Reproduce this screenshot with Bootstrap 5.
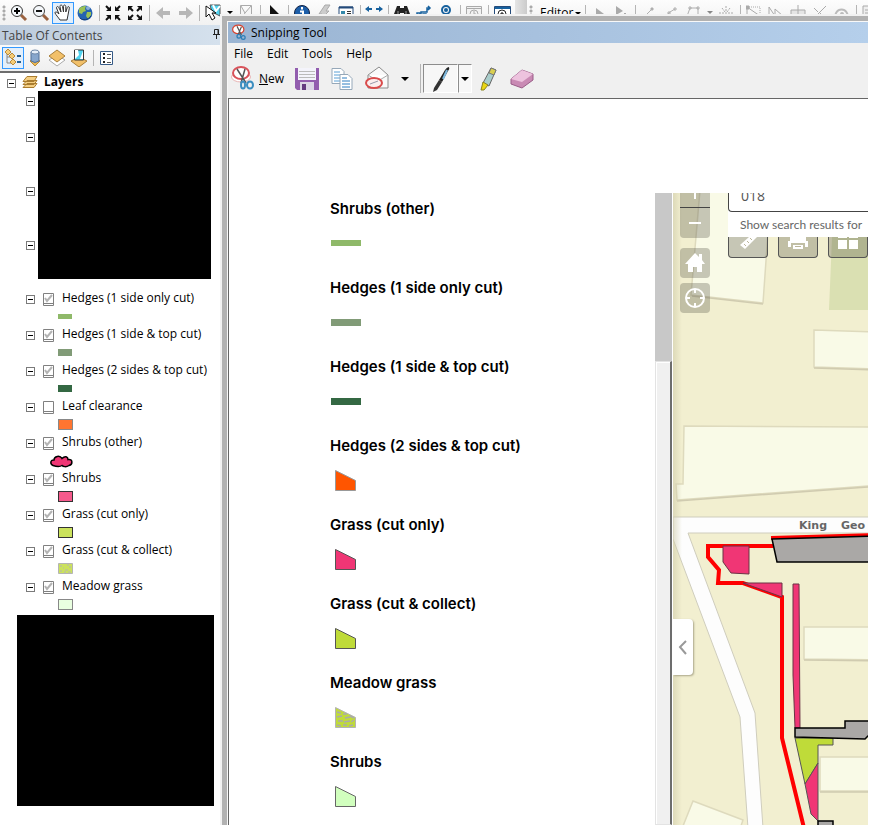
<!DOCTYPE html>
<html lang="en">
<head>
<meta charset="utf-8">
<meta name="viewport" content="width=device-width, initial-scale=1">
<title>Map layers</title>
<link href="https://cdn.jsdelivr.net/npm/bootstrap@5.3.0/dist/css/bootstrap.min.css" rel="stylesheet">
<style>
body{font:12px/18px "Open Sans","Noto Sans",sans-serif;color:#000;background:#fff}
button,input{font:inherit;color:inherit}
button{border:0;padding:0;background:none}
svg{display:block}
.desk{padding:0 3px 3px 0}
/* main tool strip */
.strip{height:25px;background:linear-gradient(#fdfdfd,#f1f1f1)}
.strip>*{flex:none}
.tb{width:22px;height:22px;display:flex;align-items:center;justify-content:center;border:1px solid transparent}
.tb.picked{border-color:#3399ff;background:#e3effb}
.sep{width:6px;height:16px;background:linear-gradient(#b5b5b5,#b5b5b5) center/1px 100% no-repeat}
.grip{width:8px;height:16px;background:radial-gradient(circle,#aaa 1px,transparent 2px) center top/4px 4px repeat-y}
.drop{width:11px;height:22px;display:flex;align-items:center;justify-content:center}
.drop::after{content:"";border:3px solid transparent;border-top-color:#000;border-bottom:0}
.drop.off::after{border-top-color:#888}
.cap{width:12px;height:25px;margin-left:2px;background:linear-gradient(90deg,#e5e5e5,#cbcbcb)}
.editor{width:47px;height:22px;text-align:left;padding-left:5px;white-space:nowrap}
.editor::after{content:"";display:inline-block;margin-left:2px;vertical-align:2px;border:3px solid transparent;border-top-color:#000;border-bottom:0}
/* contents panel */
.toc{width:222px}
.toc-main{width:220px}
.toc-head{height:20px;padding:2px 0 0 2px;background:linear-gradient(90deg,#bccbdc,#d5e1ed);color:#444}
.toc-bar{height:28px;padding-left:2px;background:linear-gradient(#fafafa,#efefef);border-bottom:2px solid #6d6d6d}
.toc-row{height:18px}
.toc-row .node{margin-top:2px}
.toc-row label{margin-left:8px;white-space:nowrap}
.toc-layers{padding-left:7px}
.node{width:9px;height:9px;border:1px solid #7a7a7a;background:linear-gradient(#000,#000) center/5px 1px no-repeat #fff;flex:none}
.layer .toc-row{padding-left:26px}
.tick{appearance:none;margin:3px 0 0 8px;width:11px;height:13px;background:url("data:image/svg+xml,%3Csvg xmlns='http://www.w3.org/2000/svg' width='11' height='13'%3E%3Cpath d='M.5.5h10v12H.5zM0 10.5h11' fill='%23fff' stroke='%23808080'/%3E%3C/svg%3E")}
.tick:checked{background-image:url("data:image/svg+xml,%3Csvg xmlns='http://www.w3.org/2000/svg' width='11' height='13'%3E%3Cpath d='M.5.5h10v12H.5zM0 10.5h11' fill='%23fff' stroke='%23808080'/%3E%3Cpath d='M2 5l2 3 5-6' fill='none' stroke='%23b4b4b4' stroke-width='2'/%3E%3C/svg%3E")}
.layer .sym{padding-left:58px}
.layer .cloud{padding-left:49px}
.bar{width:14px;height:5px}.bar.tall{height:7px}
.box{width:15px;height:11px;border:1px solid #333}
.c-lime{background:#8fb969}.c-sage{background:#819b77}.c-pine{background:#346843}
.c-orange{background:#ff7530;border-color:#888}.c-pink{background:#f55a8c}
.c-grass{background:#cbe25c}.c-mint{background:#e9ffe0;border-color:#888}
.hidden-nodes{height:198px;padding-left:26px}
.n36{height:36px;padding-top:6px}.n54{height:54px;padding-top:6px}
.black-a{width:173px;height:188px;margin-left:3px;background:#000}
.black-b{width:197px;height:191px;margin:2px 0 0 17px;background:#000}
/* window over the desktop */
.snip{left:222px;top:16px;right:0;bottom:0;border:5px solid #b2b2b2;border-width:5px 0 0 5px;outline:2px solid #f2f2f2;background:#f0f0f0;overflow:hidden}
.snip-in{border:1px solid #f8f8f8;border-width:1px 0 0 1px}
.snip-title{height:21px;padding-left:4px;background:linear-gradient(90deg,#9ab4d2,#b5cfeb)}
.snip-title span{margin-left:4px}
.snip-menu{height:21px;padding-left:6px;gap:14px}
.snip-tools{height:34px;padding-left:3px}
.snip-tools svg{flex:none}
.act{height:30px;display:flex;align-items:center}
.save{padding-left:3px}
.snip-tools .sep{height:29px}
.pen{width:35px;height:29px;border:1px solid #8d8d8d;border-right-color:#fff;border-bottom-color:#fff;background:#f7f7f7;display:flex;align-items:center;justify-content:center}
.pen.narrow{width:14px}.pen.narrow::after,.mail::after{content:"";border:4px solid transparent;border-top-color:#000;border-bottom:0}
.client{border:1px solid #666;border-width:1px 0 0 1px;background:#fff}
.legend{padding:89px 17px 0 101px;margin:0;list-style:none}
.legend li{height:79px}
.legend h2{font:600 15px/42px Inter,sans-serif;margin:0;white-space:nowrap}
.legend svg{height:28px;width:31px}
.upper{margin-top:94px}
.scroller{width:17px;background:#f0f0f0;flex:none}
.scroller .track{height:168px;background:#c8c8c8}
.scroller .thumb{border:1px solid #e3e3e3;border-right:2px solid #6d6d6d;box-shadow:inset 1px 1px #fff}
.map{background:#f2efd0;margin-left:1px;min-width:0;overflow:hidden}
.mapbtn{width:30px;height:30px;border-radius:4px;background:rgba(80,80,65,.3);color:#fff;display:flex;align-items:center;justify-content:center}
.zoomers{left:7px;top:0}
.zoomers .plus{height:15px;border-radius:0;border-bottom:1px solid #444;align-items:flex-start}
.zoomers .minus{border-radius:0 0 4px 4px;margin-bottom:10px}
.zoomers .home{margin-bottom:5px}
.search{left:55px;top:0;right:0}
.search input{display:block;width:100%;height:19px;border:1px solid #444;border-width:0 0 1px 1px;border-radius:0 0 0 4px;padding:0 0 13px 12px;font-size:14px;line-height:6px;color:#555;background:#fff;outline:0}
.find{background:#fff;height:44px}
.hint{height:25px;padding-left:12px;font-family:Lato,sans-serif;line-height:25px;color:#666;white-space:nowrap;display:block;text-decoration:none}
.tools{gap:10px}
.tool{width:40px;height:21px;border:1px solid #555;border-top:0;border-radius:0 0 4px 4px;background:rgba(80,80,65,.3);display:flex;justify-content:center;flex:none}
.fold{left:0;top:426px;width:20px;height:56px;background:#fff;border-radius:0 4px 4px 0;box-shadow:1px 1px 2px #aaa68a}
.street{font:bold 11px "DejaVu Sans",sans-serif;fill:#666}
</style>
<script src="https://cdn.jsdelivr.net/npm/bootstrap@5.3.0/dist/js/bootstrap.bundle.min.js"></script>
</head>
<body>
<div class="desk vh-100">
<div class="position-relative h-100 d-flex flex-column overflow-hidden">

<header class="strip d-flex align-items-center overflow-hidden">
<span class="grip"></span>
<button class="tb" aria-label="Zoom in"><svg width="18" height="18"><path d="M11 11l5 5" stroke="#9a6240" stroke-width="3"/><circle cx="7" cy="7" r="5.5" fill="#f5f8fb" stroke="#333"/><path d="M4 7h6M7 4v6" stroke="#000" stroke-width="2"/></svg></button>
<button class="tb" aria-label="Zoom out"><svg width="18" height="18"><path d="M11 11l5 5" stroke="#9a6240" stroke-width="3"/><circle cx="7" cy="7" r="5.5" fill="#f5f8fb" stroke="#444"/><path d="M4 7h6" stroke="#111" stroke-width="2"/></svg></button>
<button class="tb picked" aria-label="Pan"><svg width="18" height="18" fill="#fff" stroke="#333"><path d="M6 16C4 13 2 11 1 9c0-2 2-1 4 1L2.500 4c0-2 2-2 2.500 0l2 4L6 2.500c0-2 2-2 2.500 0L9.500 8V2.500c0-2 2-2 2.300 0V8l1.500-4.500c.5-1.500 2.500-1 2 .7L14 11l-1 5z"/></svg></button>
<button class="tb" aria-label="Full extent"><svg width="18" height="18"><circle cx="9" cy="9" r="7.500" fill="#2563b0"/><path d="M3 5c2-3 5-3 7-3l-1 3 1 2-3 1-1 2-3-1zM11 8l4 0 0 3-3 4-2-3z" fill="#9ac255"/><path d="M4 14c3 3 8 2 11-2" stroke="#15366e" fill="none"/><circle cx="12" cy="4" r="2" fill="#cfe3f3" opacity=".6"/></svg></button>
<span class="sep"></span>
<button class="tb" aria-label="Fixed zoom in"><svg width="16" height="16" fill="none" stroke="#111" stroke-width="2"><path d="M1 1l4 4M15 1l-4 4M1 15l4-4M15 15l-4-4"/><path fill="#111" stroke="none" d="M6 1v5H1zM10 1v5h5zM6 15v-5H1zM10 15v-5h5z"/></svg></button>
<button class="tb" aria-label="Fixed zoom out"><svg width="16" height="16" stroke="#111" stroke-width="2"><path d="M2 2l4 4M14 2l-4 4M2 14l4-4M14 14l-4-4"/><path fill="#111" stroke="none" d="M1 1h5L1 6zM15 1h-5l5 5zM1 15h5l-5-5zM15 15h-5l5-5z"/></svg></button>
<span class="sep"></span>
<button class="tb" aria-label="Back"><svg width="15" height="14"><path d="M0 7l7-6v4h7v4H7v4z" fill="#b7b7b7"/></svg></button>
<button class="tb" aria-label="Forward"><svg width="15" height="14"><path d="M15 7L8 1v4H1v4h7v4z" fill="#b7b7b7"/></svg></button>
<span class="sep"></span>
<button class="tb" aria-label="Select features"><svg width="18" height="18"><path d="M6 1h10v11L8 8z" fill="#4fd3f0" stroke="#555"/><path d="M9 1l3 6 4-5" stroke="#fff" fill="none" stroke-width="2"/><path d="M2 2v11l3-3 3 6 3-2-3-5h4z" fill="#fff" stroke="#111"/></svg></button>
<button class="drop" aria-label="Select options"></button>
<button class="tb" aria-label="Clear selection"><svg width="12" height="16" fill="#f5f5f5" stroke="#aaa"><path d="M.5.500h11v14H.5zM1 1l4 7 6-7M5 8l-4 6"/></svg></button>
<span class="sep"></span>
<button class="tb" aria-label="Select elements"><svg width="12" height="17"><path d="M2 1v14l3-3 2 5 3-1-2-5h4z" fill="#111"/></svg></button>
<span class="sep"></span>
<button class="tb" aria-label="Identify"><svg width="18" height="18"><circle cx="9" cy="9" r="7.500" fill="#1d5ea8" stroke="#124"/><path d="M7 7.500h3V14M9 3v2.500" stroke="#fff" stroke-width="2" fill="none"/></svg></button>
<button class="tb" aria-label="Hyperlink"><svg width="14" height="18"><path d="M8 1h5L9 7h3L2 17l3-7H2z" fill="#ccc" stroke="#aaa"/></svg></button>
<button class="tb" aria-label="HTML popup"><svg width="16" height="16"><path d="M1 2h14v12H1z" fill="#fff" stroke="#244b7a"/><path d="M1 2.500h14" stroke="#244b7a" stroke-width="2"/><path d="M3 6h4v5H3z" fill="#38a"/><path d="M9 6.500h4M9 8.500h4M9 11h4" stroke="#333"/></svg></button>
<span class="sep"></span>
<button class="tb" aria-label="Measure"><svg width="18" height="18"><path d="M0 5l4-3v2h3v2H4v2zM18 5l-4-3v2h-3v2h3v2z" fill="#17619e"/><path d="M1 10h16v5H1z" fill="#e9b872"/></svg></button>
<span class="sep"></span>
<button class="tb" aria-label="Find"><svg width="16" height="16" fill="#222"><path d="M3 1h3v2h4V1h3l3 8v4h-6V8H6v5H0V9z"/><path d="M4 6v4M12 6v4" stroke="#999"/></svg></button>
<button class="tb" aria-label="Find route"><svg width="16" height="16" fill="none" stroke="#17619e" stroke-width="1.500"><path d="M2 11h3V7h6V3h3M12 1l2 2-2 2"/><path d="M1 8h3v3H1zM7 9h3v3H7z" fill="#fff"/></svg></button>
<button class="tb" aria-label="Go to XY"><svg width="16" height="18" fill="none" stroke="#17619e" stroke-width="2"><circle cx="8" cy="6" r="4"/><circle cx="8" cy="6" r="1"/><path d="M1 13h14" stroke-dasharray="2 1"/></svg></button>
<span class="sep"></span>
<button class="tb" aria-label="Time slider"><svg width="16" height="16" fill="#f2f2f2" stroke="#aaa"><path d="M.5 1.500h15v13H.5zM1 3.500h14"/><circle cx="8" cy="9" r="4"/><path d="M8 6v3h2"/></svg></button>
<span class="sep"></span>
<button class="tb" aria-label="Viewer window"><svg width="17" height="16"><path d="M.5 1.500h16v13H.5z" fill="#fff" stroke="#244b7a"/><path d="M1 3h15" stroke="#17619e" stroke-width="2"/><circle cx="8" cy="9" r="4" fill="#fff" stroke="#222"/><path d="M6 9h4M8 7v4" stroke="#000"/></svg></button>
<span class="cap"></span><span class="grip"></span>
<button class="editor">Editor</button>
<span class="sep"></span>
<button class="tb" aria-label="Edit tool"><svg width="12" height="14"><path d="M3 2v11l8-5z" fill="#aaa"/></svg></button>
<button class="tb" aria-label="Annotation tool"><svg width="14" height="16"><path d="M2 1v9l7-4z" fill="#aaa"/><path d="M10 8h2v2h-2z" fill="#aaa"/></svg></button>
<span class="sep"></span>
<button class="tb" aria-label="Straight"><svg width="14" height="14" stroke="#b0b0b0"><path d="M2 11l8-8"/><path d="M9 2h2v2H9z" fill="#aaa"/></svg></button>
<button class="tb" aria-label="Arc"><svg width="14" height="14" stroke="#b0b0b0" fill="none"><path d="M1 12q4-7 10-9M4 6h2v2H4zM10 2h2v2h-2z"/></svg></button>
<button class="tb" aria-label="Trace"><svg width="16" height="16" stroke="#b0b0b0" fill="none"><path d="M1 14L5 3h8v10M4 2h2v2H4zM12 2h2v2h-2z"/></svg></button>
<button class="drop off" aria-label="Trace options"></button>
<button class="tb" aria-label="Point"><svg width="16" height="16" stroke="#aaa" fill="none"><path d="M8 1v6M4 3l3 4M12 3L9 7M1 8h14M1 10h14" stroke-dasharray="2 1"/></svg></button>
<span class="sep"></span>
<button class="tb" aria-label="Edit vertices"><svg width="16" height="16" stroke="#aaa" fill="none"><path d="M1 13V2l13 9"/><path d="M3 2h11v9" stroke-dasharray="1 1"/><path d="M0 1h3v3H0zM13 10h2v2h-2z" fill="#aaa"/></svg></button>
<button class="tb" aria-label="Reshape"><svg width="16" height="16" stroke="#aaa" fill="none"><path d="M1 13V2l6 9V4l8 7"/></svg></button>
<button class="tb" aria-label="Cut polygons"><svg width="16" height="16" stroke="#aaa" fill="#e5e5e5"><path d="M1 5h14v9H1zM8 0v14"/></svg></button>
<button class="tb" aria-label="Split"><svg width="16" height="16" stroke="#aaa"><path d="M3 12L14 1M2 3l4 4M8 8l5 5"/></svg></button>
<button class="tb" aria-label="Rotate"><svg width="16" height="16" stroke="#bbb" fill="none" stroke-width="2"><path d="M2 13a6 6 0 1 1 11 0"/><circle cx="8" cy="9" r="1"/></svg></button>
<span class="sep"></span>
<button class="tb" aria-label="Attributes"><svg width="16" height="16" stroke="#aaa" fill="#eee"><path d="M1 1h12v14H1zM3 5h8M3 8h8"/></svg></button>
</header>

<aside class="toc flex-grow-1 border-end">
<div class="toc-main">
<div class="toc-head d-flex align-items-center justify-content-between"><span>Table Of Contents</span>
<button class="pb-1" aria-label="Pin"><svg width="7" height="10" fill="none" stroke="#222"><path d="M1.500 5V.5h4V5M5 1v4M0 5.500h7M3.500 6v4"/></svg></button></div>
<div class="toc-bar d-flex align-items-center">
<button class="tb picked" aria-label="List by drawing order"><svg width="18" height="18"><path d="M3 5v9h4M3 8h4" stroke="#888" fill="none"/><path d="M4 0l3 3-3 3-3-3zM8 4l3 3-3 3-3-3zM9 10l3 3-3 3-3-3z" fill="#f5cd78" stroke="#b98a38"/><path d="M13 7h4M13 13h4" stroke="#235f94" stroke-width="2"/></svg></button>
<button class="tb" aria-label="List by source"><svg width="14" height="18"><path d="M2 12l5-3 5 3-5 5z" fill="#eeb84d" stroke="#b98a38"/><path d="M3 3v9q4 3 8 0V3z" fill="#87a6cc" stroke="#506e94"/><ellipse cx="7" cy="3" rx="4" ry="2" fill="#e5eef8" stroke="#6d87a8"/></svg></button>
<button class="tb" aria-label="List by visibility"><svg width="18" height="18"><path d="M1 11l8-5 8 5-8 6z" fill="#fff" stroke="#aaa"/><path d="M1 7l8-6 8 6-8 6z" fill="#f2c069" stroke="#a97f3a"/></svg></button>
<button class="tb" aria-label="List by selection"><svg width="18" height="18"><path d="M1 12l8-4 8 4-8 6z" fill="#f2c069" stroke="#a97f3a"/><path d="M4.500 1h9v10h-9z" fill="#4fd3f0" stroke="#333"/><path d="M5 1h3l1 5-4 4zM10 10l3-8v8z" fill="#fff"/></svg></button>
<span class="sep"></span>
<button class="tb" aria-label="Options"><svg width="14" height="15"><path d="M.5.500h12v13H.5z" fill="#fff" stroke="#365b87"/><path d="M3 2h2v2H3zM3 6h2v2H3zM3 10h2v2H3z" fill="#222"/><path d="M7 3.500h4M7 7.500h4M7 11.500h4" stroke="#555"/></svg></button>
</div>
<div class="toc-layers toc-row d-flex align-items-center"><button class="node" aria-label="Collapse Layers"></button>
<svg class="ms-1" width="20" height="14" fill="#f5cf82" stroke="#aa7c2e"><path d="M3 12.500l4-4h10l-3 4zM3 9.500l4-4h10l-3 4zM3 6.500l4-5h10l-3 5z"/></svg><b class="ms-1">Layers</b></div>
<div class="hidden-nodes d-flex">
<div><div class="n36"><button class="node d-block" aria-label="Collapse"></button></div><div class="n54"><button class="node d-block" aria-label="Collapse"></button></div><div class="n54"><button class="node d-block" aria-label="Collapse"></button></div><div class="n54"><button class="node d-block" aria-label="Collapse"></button></div></div>
<div class="black-a"></div></div>

<div class="layer"><div class="toc-row d-flex align-items-center"><button class="node" aria-label="Collapse"></button><input class="tick" type="checkbox" id="l1" checked><label for="l1">Hedges (1 side only cut)</label></div><div class="toc-row sym d-flex align-items-center"><div class="bar c-lime"></div></div></div>
<div class="layer"><div class="toc-row d-flex align-items-center"><button class="node" aria-label="Collapse"></button><input class="tick" type="checkbox" id="l2" checked><label for="l2">Hedges (1 side &amp; top cut)</label></div><div class="toc-row sym d-flex align-items-center"><div class="bar tall c-sage"></div></div></div>
<div class="layer"><div class="toc-row d-flex align-items-center"><button class="node" aria-label="Collapse"></button><input class="tick" type="checkbox" id="l3" checked><label for="l3">Hedges (2 sides &amp; top cut)</label></div><div class="toc-row sym d-flex align-items-center"><div class="bar tall c-pine"></div></div></div>
<div class="layer"><div class="toc-row d-flex align-items-center"><button class="node" aria-label="Collapse"></button><input class="tick" type="checkbox" id="l4"><label for="l4">Leaf clearance</label></div><div class="toc-row sym d-flex align-items-center"><div class="box c-orange"></div></div></div>
<div class="layer"><div class="toc-row d-flex align-items-center"><button class="node" aria-label="Collapse"></button><input class="tick" type="checkbox" id="l5" checked><label for="l5">Shrubs (other)</label></div><div class="toc-row cloud d-flex align-items-end"><svg width="26" height="14"><path d="M4 10.500c-3-1-3-6 1-5.500 0-4 6-5 8-1.500 3-3 6-2 6 1 5-1 5 5 1 6-3 2-6 1-7 0-3 2-6 1-9 0z" fill="#f03675" stroke="#000" stroke-width="1.500"/></svg></div></div>
<div class="layer"><div class="toc-row d-flex align-items-center"><button class="node" aria-label="Collapse"></button><input class="tick" type="checkbox" id="l6" checked><label for="l6">Shrubs</label></div><div class="toc-row sym d-flex align-items-center"><div class="box c-pink"></div></div></div>
<div class="layer"><div class="toc-row d-flex align-items-center"><button class="node" aria-label="Collapse"></button><input class="tick" type="checkbox" id="l7" checked><label for="l7">Grass (cut only)</label></div><div class="toc-row sym d-flex align-items-center"><div class="box c-grass"></div></div></div>
<div class="layer"><div class="toc-row d-flex align-items-center"><button class="node" aria-label="Collapse"></button><input class="tick" type="checkbox" id="l8" checked><label for="l8">Grass (cut &amp; collect)</label></div><div class="toc-row sym d-flex align-items-center"><svg width="15" height="11"><path d="M.5.500h14v10H.5z" fill="#cbe25c" stroke="#b4b4b4"/><path d="M2 3h2M9 2h2M5 5h1M11 4h2M7 7h3M2 8h2M6 9h2M10 9h3" stroke="#b4b4b4"/></svg></div></div>
<div class="layer"><div class="toc-row d-flex align-items-center"><button class="node" aria-label="Collapse"></button><input class="tick" type="checkbox" id="l9" checked><label for="l9">Meadow grass</label></div><div class="toc-row sym d-flex align-items-center"><div class="box c-mint"></div></div></div>
<div class="black-b"></div>
</div>
</aside>

<main class="snip position-absolute d-flex flex-column">
<div class="snip-in d-flex flex-column flex-grow-1">
<div class="snip-title d-flex align-items-center">
<svg width="15" height="17" viewBox="0 0 24 26"><ellipse cx="10" cy="8" rx="9" ry="7" fill="#fff" stroke="#d8432f" stroke-width="2"/><path d="M8 3l7 14M15 4l-5 12" stroke="#555" stroke-width="2"/><circle cx="11" cy="19" r="3" fill="none" stroke="#2b7eb5" stroke-width="2"/><circle cx="18" cy="21" r="3" fill="none" stroke="#2b7eb5" stroke-width="2"/></svg>
<span>Snipping Tool</span></div>
<nav class="snip-menu d-flex align-items-center"><button>File</button><button>Edit</button><button>Tools</button><button>Help</button></nav>
<div class="snip-tools d-flex align-items-start">
<button class="act"><svg width="24" height="26"><ellipse cx="10" cy="11" rx="9.500" ry="5" fill="#fff" stroke="#e9b5b5"/><ellipse cx="10" cy="7" rx="8" ry="6" fill="#fff" stroke="#d9525a" stroke-width="2"/><path d="M6 3l9 14M14 3l-4 14" stroke="#555" stroke-width="1.500"/><ellipse cx="12" cy="19" rx="2" ry="3.500" fill="none" stroke="#3c8ec0" stroke-width="2"/><ellipse cx="19" cy="19" rx="3" ry="3.500" fill="none" stroke="#3c8ec0" stroke-width="2"/></svg><span class="ms-1"><u>N</u>ew</span></button>
<button class="act save ms-2" aria-label="Save"><svg width="24" height="24"><path d="M0 1h24v22H2l-2-2z" fill="#925dae"/><path d="M3 1h18v12H3z" fill="#f4f4fb"/><path d="M4 4.500h16M4 7.500h16M4 10.500h16" stroke="#bbb"/><path d="M5 15h14v8H5z" fill="#dcd6e6"/><path d="M7 17h4v6H7z" fill="#643a80"/></svg></button>
<button class="act ms-2 ps-1" aria-label="Copy"><svg width="22" height="24" fill="#fff" stroke="#96a8b9"><path d="M1 1.500h9l3 3v12H1z"/><path d="M3 5h6M3 8h8M3 11h8M3 14h8" stroke="#5ba0d5"/><path d="M9 7.500h8l4 4v11H9z"/><path d="M11 11h5M11 14h8M11 17h8M11 20h8" stroke="#2f7fc1"/></svg></button>
<button class="act mail ms-2 ps-1" aria-label="Send snip"><svg class="me-1" width="32" height="26"><path d="M3 9l11-8 9 8v13H3z" fill="#f9f9f9" stroke="#8b8b8b"/><path d="M3 9l10 6 10-6" fill="#fff" stroke="#aaa"/><ellipse cx="9" cy="17" rx="8" ry="5" fill="#fbeeee" stroke="#d94b4b" stroke-width="2"/><path d="M5 18l8-3" stroke="#99a"/></svg></button>
<span class="sep ms-2"></span>
<button class="pen" aria-label="Pen"><svg width="20" height="26"><path d="M18 1q1 2-1 4L11 16 8 14 14 4q2-3 4-3z" fill="#222"/><path d="M16 4l-4 9" stroke="#7db7dc" stroke-width="2"/><path d="M8 14l3 2-5 8-4 2 1-4z" fill="#333"/></svg></button>
<button class="pen narrow" aria-label="Pen options"></button>
<button class="act ms-2" aria-label="Highlighter"><svg width="18" height="24"><path d="M11 1l5 2-7 16-6-3z" fill="#a9cdcb" stroke="#666"/><path d="M11 1l5 2-2 5-5-2z" fill="#d9cf4f" stroke="#777"/><path d="M3 15l5 3-4 5-3 0z" fill="#ead614" stroke="#8a8420"/></svg></button>
<button class="act ms-2 ps-1" aria-label="Eraser"><svg width="24" height="20"><path d="M1 10L12 1l11 4v6L12 19 1 15z" fill="#c98ab4" stroke="#9a5d88"/><path d="M1 10L12 1l11 4-11 8z" fill="#edc3de"/></svg></button>
</div>

<div class="client row g-0 flex-grow-1">
<div class="col-8"><ul class="legend">
<li><h2>Shrubs (other)</h2><svg><path d="M1 10h30v6H1z" fill="#8fb969"/></svg></li>
<li><h2>Hedges (1 side only cut)</h2><svg><path d="M1 10h30v7H1z" fill="#819b77"/></svg></li>
<li><h2>Hedges (1 side &amp; top cut)</h2><svg><path d="M1 10h30v7H1z" fill="#346843"/></svg></li>
<li><h2>Hedges (2 sides &amp; top cut)</h2><svg><path d="M5.500 3.500l20 10v10h-20z" fill="#ff5500" stroke="#999"/></svg></li>
<li><h2>Grass (cut only)</h2><svg><path d="M5.500 3.500l20 10v10h-20z" fill="#f03675" stroke="#555"/></svg></li>
<li><h2>Grass (cut &amp; collect)</h2><svg><path d="M5.500 3.500l20 10v10h-20z" fill="#bfdb39" stroke="#555"/></svg></li>
<li><h2>Meadow grass</h2><svg><path d="M5.500 3.500l20 10v10h-20z" fill="#bfdb39" stroke="#b4b4b4"/><path d="M7 8l4 1M13 10h4M7 13l5-1M15 14l5-1M20 12l4 2M8 17h5M14 18l6-1M21 18l3-2M7 21l4 1M13 21h4M19 22l4-1" stroke="#aaa" stroke-width="1.500"/></svg></li>
<li><h2>Shrubs</h2><svg><path d="M5.500 3.500l20 10v10h-20z" fill="#d1ffbe" stroke="#666"/></svg></li>
</ul></div>
<div class="col-4 d-flex"><div class="upper d-flex flex-grow-1">
<div class="scroller d-flex flex-column"><div class="track"></div><div class="thumb flex-grow-1"></div></div>
<section class="map position-relative flex-grow-1">
<svg class="position-absolute" width="100%" height="100%">
<defs><linearGradient id="edge"><stop stop-color="#cfcba9"/><stop offset="1" stop-color="#cfcba9" stop-opacity="0"/></linearGradient></defs>
<g transform="translate(-673 -193)">
<g fill="#f9fae7" stroke="#dedabd" stroke-width="1.500">
<path d="M700 190L691 295 763 303 771 190z"/>
<path d="M834 190L829 310H880V190z" fill="#dae0b2" stroke="none"/>
<path d="M814 330l66 2v37l-66-2zM684 426l196 1v58L677 500l-1-16h7zM804 627h76v33l-76-1zM820 757h60v34h-60zM693 801l50 19-4 12-58-1z"/></g>
<path d="M677 501l203-15M692 296l71 8M814 368l66 2M804 660l76 1M820 792h60" stroke="#d0cbb0" stroke-width="1.500" fill="none"/>
<path d="M673 517h200v16H688L755 713l8 115h-15L740 717 673 539z" fill="#fdfdfd" stroke="#cfcdbd"/>
<path d="M673 193h9v640h-9z" fill="url(#edge)" opacity=".6"/>
<path d="M793 584h6l1 144h-5l-2-53z" fill="#f03675" stroke="#6b3344"/>
<path d="M771 538l110-3M773 546h-65v11l11 13-1 13h25l39 14v141l22 90" fill="none" stroke="#f00" stroke-width="4"/>
<path d="M723 546h26v28l-18-1-8-11zM743 583h39v14z" fill="#f03675" stroke="#6b3344"/>
<path d="M795 738h38v7h-15v18l-13 21z" fill="#bfdb39" stroke="#555"/>
<path d="M818 763v58l-7-7-6-30z" fill="#f03675" stroke="#555"/>
<path d="M772 539l108-3v26H777zM795 728h50v-7h35v12l-12 3-3 3-70-2zM818 821h15v14h-15z" fill="#aaa8a6" stroke="#000" stroke-width="1.500"/>
<text class="street" x="799" y="529">King</text><text class="street" x="841" y="529">Geo</text>
</g></svg>
<div class="zoomers position-absolute d-flex flex-column">
<button class="mapbtn plus" aria-label="Zoom in map"><svg width="12" height="7"><path d="M6 0v6" stroke="#fff" stroke-width="2"/></svg></button>
<button class="mapbtn minus" aria-label="Zoom out map"><svg width="12" height="4"><path d="M0 2h12" stroke="#fff" stroke-width="2"/></svg></button>
<button class="mapbtn home" aria-label="Home"><svg width="22" height="20" fill="#fff"><path d="M11 0l4 4V1h3v6l3 4h-3v8h-5v-5H9v5H4v-8H1z"/></svg></button>
<button class="mapbtn" aria-label="My location"><svg width="22" height="22" fill="none" stroke="#fff" stroke-width="2"><circle cx="11" cy="11" r="9"/><path d="M11 2v4M11 16v4M2 11h4M16 11h4"/></svg></button>
</div>
<div class="search position-absolute overflow-hidden">
<div class="find"><input aria-label="Search" value="018"><a class="hint" href="#">Show search results for</a></div>
<div class="tools d-flex">
<button class="tool" aria-label="Measure"><svg width="20" height="14"><path d="M13 0h6L7 12 2 8l9-8" fill="#fff"/><path d="M6 7l2 2M9 4l2 2M12 1l2 2" stroke="#bbb69a"/></svg></button>
<button class="tool" aria-label="Print"><svg width="22" height="14"><path d="M3 0h16v4h2v6h-3V6H4v4H1V4h2zM6 8h10v4H6z" fill="#fff"/><path d="M8 9.500h6" stroke="#bbb69a"/></svg></button>
<button class="tool" aria-label="Basemaps"><svg width="20" height="14" fill="#fff"><path d="M0 0h9v1H0zM11 0h9v1h-9zM0 3h9v9H0zM11 3h9v9h-9z"/></svg></button>
</div></div>
<button class="fold position-absolute" aria-label="Collapse panel"><svg width="20" height="20" fill="none" stroke="#999" stroke-width="2"><path d="M13 4l-6 6 6 7"/></svg></button>
</section>
</div></div>
</div>
</div>
</main>
</div>
</div>
</body>
</html>
